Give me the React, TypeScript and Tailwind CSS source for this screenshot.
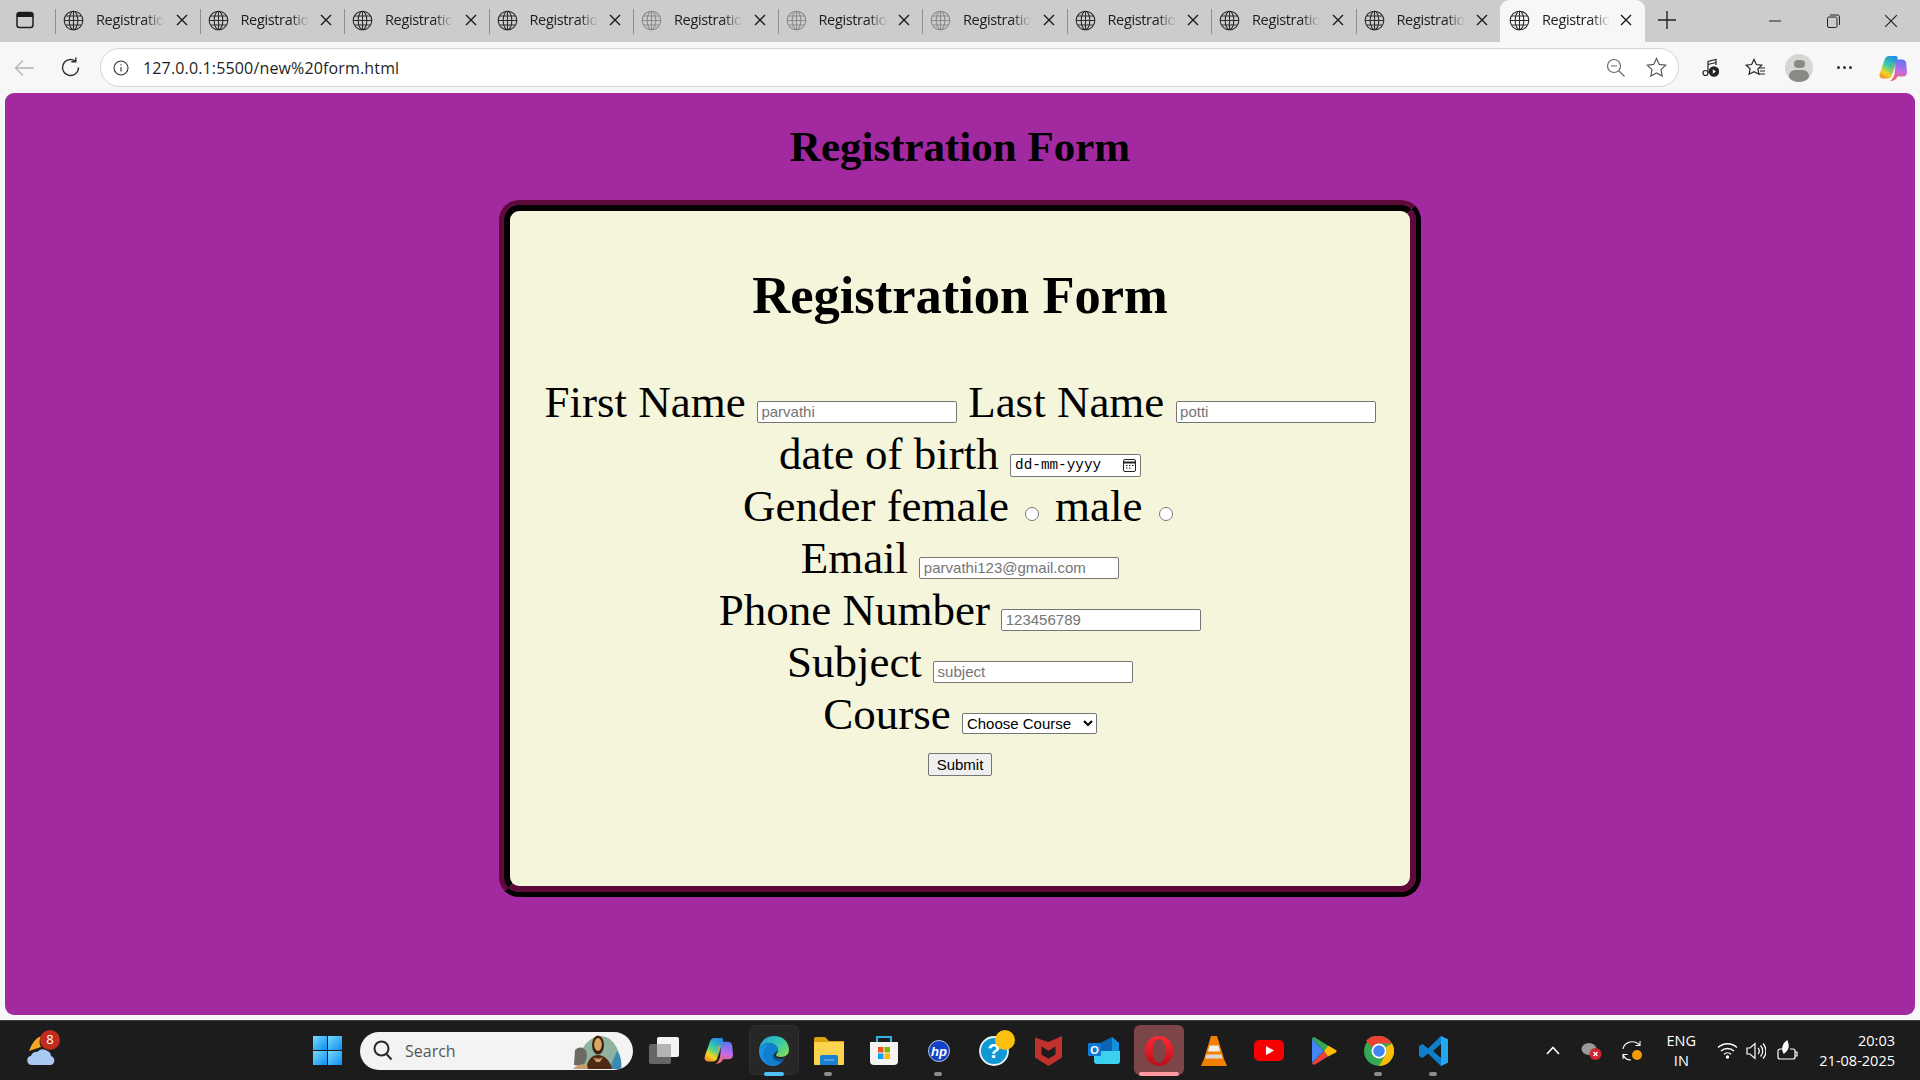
import React from "react";

const TABS = [0, 1, 2, 3, 4, 5, 6, 7, 8, 9, 10];

function Globe({ dim }: { dim?: boolean }) {
  return (
    <svg width="21" height="21" viewBox="0 0 21 21" fill="none" stroke={dim ? "#8a8a8a" : "#2b2b2b"} strokeWidth="1.1" className="shrink-0">
      <circle cx="10.5" cy="10.5" r="9.3" />
      <ellipse cx="10.5" cy="10.5" rx="4.3" ry="9.3" />
      <path d="M1.2 10.5h18.6M2.6 6h15.8M2.6 15h15.8M10.5 1.2v18.6" />
    </svg>
  );
}

function Close({ size = 12, width = 1.4, color = "#1a1a1a" }: { size?: number; width?: number; color?: string }) {
  return (
    <svg width={size} height={size} viewBox="0 0 12 12" fill="none" stroke={color} strokeWidth={width} className="shrink-0">
      <path d="M1 1l10 10M11 1L1 11" />
    </svg>
  );
}

function Tab({ i }: { i: number }) {
  const active = i === 10;
  const dim = i >= 4 && i <= 6;
  return (
    <div className={active ? "relative w-[145px] h-[42px] bg-[#f7f7f7] rounded-t-[9px] flex items-center pl-[9px] pr-[13px] pb-[2px]" : "relative w-[144.5px] h-[42px] flex items-center pl-[8px] pr-[12px] pb-[2px]"}>
      {!active && i !== 9 && <div className="absolute right-[-1px] top-[9px] h-[25px] w-px bg-[#8f8f8f]" />}
      {i === 0 && <div className="absolute left-0 top-[9px] h-[25px] w-px bg-[#8f8f8f]" />}
      <Globe dim={dim} />
      <span className="ml-[12px] whitespace-nowrap text-[14.5px] text-[#1d1d1d] [font-family:'Open_Sans',sans-serif] tracking-[-0.35px] [mask-image:linear-gradient(to_right,black_72%,transparent_100%)]">
        Registratio
      </span>
      <div className="ml-auto">
        <Close />
      </div>
    </div>
  );
}

function TabStrip() {
  return (
    <div className="h-[42px] shrink-0 bg-[#cccccc] flex items-start">
      <div className="w-[55px] h-[42px] flex items-center justify-center pr-[6px] pb-[2px]">
        <svg width="18" height="18" viewBox="0 0 18 18" fill="none">
          <rect x="1" y="1.5" width="16" height="15" rx="2.5" stroke="#1c1c1c" strokeWidth="1.5" />
          <path d="M1 6V4a2.5 2.5 0 0 1 2.5-2.5h11A2.5 2.5 0 0 1 17 4v2z" fill="#1c1c1c" />
        </svg>
      </div>
      {TABS.map((i) => (
        <Tab key={i} i={i} />
      ))}
      <div className="w-[44px] h-[42px] flex items-center justify-center pb-[2px]">
        <svg width="18" height="18" viewBox="0 0 18 18" stroke="#222" strokeWidth="1.4">
          <path d="M9 0v18M0 9h18" />
        </svg>
      </div>
      <div className="ml-auto flex h-[42px] items-center">
        <div className="w-[58px] flex justify-center">
          <svg width="12" height="2" viewBox="0 0 12 2" stroke="#222"><path d="M0 1h12" /></svg>
        </div>
        <div className="w-[58px] flex justify-center">
          <svg width="13" height="14" viewBox="0 0 13 14" fill="none" stroke="#222" strokeWidth="1">
            <rect x="0.5" y="3" width="9.5" height="10.5" rx="1.5" />
            <path d="M3 1h7.5A2 2 0 0 1 12.5 3v8" />
          </svg>
        </div>
        <div className="w-[58px] flex justify-center">
          <Close size={14} width={1} color="#222" />
        </div>
      </div>
    </div>
  );
}

function Copilot({ size, id }: { size: number; id: string }) {
  return (
    <svg width={size} height={size} viewBox="0 0 28 28">
      <defs>
        <linearGradient id={id + "a"} x1="0.7" y1="0" x2="0.2" y2="1">
          <stop offset="0" stopColor="#1f8fe8" />
          <stop offset="0.45" stopColor="#3fd0a0" />
          <stop offset="0.75" stopColor="#f2d81f" />
          <stop offset="1" stopColor="#f58a2a" />
        </linearGradient>
        <linearGradient id={id + "b"} x1="0.6" y1="0" x2="0.4" y2="1">
          <stop offset="0" stopColor="#5a78f0" />
          <stop offset="0.5" stopColor="#c06ae8" />
          <stop offset="1" stopColor="#f56a5a" />
        </linearGradient>
      </defs>
      <path d="M10 2h6.500c2 0 2.500 1.500 1.800 3.500L13 21c-.8 2.500-2 3.500-4.500 3.500H4C1.200 24.500 0 22 .8 19.500L5.500 6C6.300 3.500 8 2 10 2z" fill={"url(#" + id + "a)"} />
      <path d="M17 5.500h6c2.500 0 3.700 1.500 4.200 3.500l.8 9c0 3-1.500 4.500-4.500 4.500h-5c-1.500 3-3.500 4.500-7.500 4.500 2.500-1.500 3.500-4 4.500-7z" fill={"url(#" + id + "b)"} />
      <path d="M14 9.500l2-.5-3.500 11-1.500.5z" fill="#f4a03a" opacity="0.65" />
    </svg>
  );
}

function Toolbar() {
  return (
    <div className="h-[51px] shrink-0 bg-[#f7f7f7] flex items-center">
      <div className="w-[100px] flex items-center pl-[14px] gap-[25px]">
        <svg width="21" height="18" viewBox="0 0 21 18" fill="none" stroke="#b4b4b4" strokeWidth="1.3"><path d="M20 9H1.5M9 1.5L1.5 9 9 16.5" /></svg>
        <svg width="21" height="21" viewBox="0 0 21 21" fill="none" stroke="#2f2f2f" strokeWidth="1.4">
          <path d="M18.5 10.5A8 8 0 1 1 15 3.9" />
          <path d="M15.8 0.5v4.3h-4.4" />
        </svg>
      </div>
      <div className="w-[1579px] h-[39px] bg-white rounded-full border border-[#d4d4d4] flex items-center pl-[12px] pr-[11px]">
        <svg width="16" height="16" viewBox="0 0 16 16" fill="none" stroke="#333" strokeWidth="1.1">
          <circle cx="8" cy="8" r="7" />
          <path d="M8 7v4.5M8 4.2v1.2" />
        </svg>
        <span className="ml-[14px] text-[16px] text-[#1f1f1f] [font-family:'Open_Sans',sans-serif] tracking-[0.15px]">127.0.0.1:5500/new%20form.html</span>
        <div className="ml-auto flex items-center gap-[20px]">
          <svg width="20" height="20" viewBox="0 0 20 20" fill="none" stroke="#6a6a6a" strokeWidth="1.2">
            <circle cx="8" cy="8" r="6.5" />
            <path d="M5 8h6M13 13l5.5 5.5" />
          </svg>
          <svg width="21" height="21" viewBox="0 0 21 21" fill="none" stroke="#5a5a5a" strokeWidth="1.2">
            <path d="M10.5 1.5l2.8 5.9 6.4.8-4.7 4.4 1.2 6.4-5.7-3.1-5.7 3.1 1.2-6.4L1.3 8.2l6.4-.8z" />
          </svg>
        </div>
      </div>
      <div className="flex-1 relative h-[51px] flex items-center pl-[23px]">
        <svg width="17" height="19" viewBox="0 0 17 19" fill="none" stroke="#222" strokeWidth="1.2">
          <circle cx="3.5" cy="15" r="2.5" />
          <path d="M6 15V3.5L14 1.5V7" />
          <path d="M6 6.5L14 4.5" />
          <circle cx="12" cy="13.5" r="4.6" fill="#222" />
          <path d="M10.8 11.3l3 2.2-3 2.2z" fill="#fff" stroke="none" />
        </svg>
        <svg width="21" height="20" viewBox="0 0 21 20" fill="none" stroke="#222" strokeWidth="1.2" className="ml-[26px]">
          <path d="M9 1.5l2.4 5 5.4.7-3.9 3.7 1 5.3L9 13.6l-4.9 2.6 1-5.3L1.2 7.2l5.4-.7z" />
          <path d="M14 10h6M15 13h5M14 16h6" />
        </svg>
        <div className="ml-[19px] w-[28px] h-[28px] rounded-full bg-[#d8d6d2] overflow-hidden flex flex-col items-center">
          <div className="mt-[6px] w-[11px] h-[11px] rounded-full bg-[#8b8985]" />
          <div className="mt-[2px] w-[20px] h-[14px] rounded-full bg-[#8b8985]" />
        </div>
        <div className="ml-[24px] flex gap-[3px]">
          <div className="w-[3px] h-[3px] rounded-full bg-[#333]" />
          <div className="w-[3px] h-[3px] rounded-full bg-[#333]" />
          <div className="w-[3px] h-[3px] rounded-full bg-[#333]" />
        </div>
        <div className="ml-[27px]">
          <Copilot size={28} id="cp1" />
        </div>
      </div>
    </div>
  );
}

const inputCls = "inline-block w-[200px] h-[22px] bg-white border border-[#767676] rounded-[2px] px-[3.5px] text-[15px] leading-[17px] text-black placeholder:text-[#757575] [font-family:'Liberation_Sans',Arial,sans-serif] align-baseline";
const radioCls = "m-[3px_4.400px_0_5px] w-[14px] h-[14px] align-baseline";

function Field({ placeholder, type = "text" }: { placeholder: string; type?: string }) {
  return <input type={type} placeholder={placeholder} className={inputCls} />;
}

function FormCard() {
  return (
    <div className="w-[922px] h-[697px] mx-auto rounded-[20px] border-[5px] border-t-[#5e0a3a] border-l-[#5e0a3a] border-r-black border-b-black">
      <div className="h-full rounded-[15px] border-[6px] border-t-black border-l-black border-r-[#5e0a3a] border-b-[#5e0a3a] bg-[#f5f5dc] text-center">
        <h1 className="text-[52.5px] font-bold leading-[60px] pt-[54px] text-black">Registration Form</h1>
        <div className="mt-[51px] text-[45px] leading-[52px] text-black">
          First Name <Field placeholder="parvathi" /> Last Name <Field placeholder="potti" />
          <br />
          date of birth{" "}
          <span className="inline-flex items-center w-[131px] h-[23px] bg-white border border-[#767676] rounded-[2px] pl-[4px] pr-[3px] text-[14.33px] leading-[21px] text-black [font-family:'Liberation_Mono',monospace] align-baseline">
            dd-mm-yyyy
            <svg width="13" height="13" viewBox="0 0 13 13" fill="none" stroke="#222" strokeWidth="1" className="ml-auto mr-[1px]">
              <rect x="0.5" y="0.5" width="12" height="12" rx="1.5" />
              <path d="M0.5 3.500h12" strokeWidth="2" />
              <path d="M3 6.500h1.500M6 6.500h1.500M9 6.500h1.500M3 9h1.500M6 9h1.500" />
            </svg>
          </span>
          <br />
          Gender female <input type="radio" name="g" className={radioCls} /> male{" "}
          <input type="radio" name="g" className={radioCls} />
          <br />
          Email <Field placeholder="parvathi123@gmail.com" />
          <br />
          Phone Number <Field placeholder="123456789" />
          <br />
          Subject <Field placeholder="subject" />
          <br />
          Course{" "}
          <select className="w-[135px] h-[21px] bg-white border border-[#767676] rounded-[2px] text-[15px] text-black [font-family:'Liberation_Sans',Arial,sans-serif] align-baseline">
            <option>Choose Course</option>
          </select>
        </div>
        <button className="mt-[13px] w-[64px] h-[23px] bg-[#efefef] border border-[#767676] rounded-[2px] text-[15px] leading-[17px] text-black [font-family:'Liberation_Sans',Arial,sans-serif]">
          Submit
        </button>
      </div>
    </div>
  );
}

function PageArea() {
  return (
    <div className="flex-1 min-h-0 bg-[#f7f7f7] px-[5px] pb-[5px]">
      <div className="h-full rounded-[9px] bg-[#a2299f] [font-family:'Liberation_Serif','Times_New_Roman',serif]">
        <h2 className="text-center text-[43px] font-bold leading-[50px] pt-[29px] pb-[28px] text-black">Registration Form</h2>
        <FormCard />
      </div>
    </div>
  );
}

function Slot({ children, bg, bar, dot }: { children: React.ReactNode; bg?: string; bar?: string; dot?: boolean }) {
  return (
    <div className="relative w-[55px] h-[60px] flex items-center justify-center">
      {bg && <div className={bg} />}
      <div className="relative flex items-center justify-center">{children}</div>
      {bar && <div className={bar} />}
      {dot && <div className="absolute bottom-[5px] left-[23px] w-[8px] h-[4px] rounded-full bg-[#8c8c8c]" />}
    </div>
  );
}

function TaskView() {
  return (
    <svg width="32" height="30" viewBox="0 0 32 30">
      <rect x="1" y="8" width="22" height="20" rx="2" fill="#666" />
      <rect x="9" y="1" width="22" height="20" rx="2" fill="#f3f3f3" />
      <rect x="9" y="8" width="14" height="13" rx="1" fill="#b4b4b4" />
    </svg>
  );
}

function EdgeIcon() {
  return (
    <svg width="30" height="30" viewBox="0 0 30 30">
      <defs>
        <linearGradient id="eg" x1="0" y1="0" x2="1" y2="0.8"><stop offset="0" stopColor="#1f9fdc" /><stop offset="0.55" stopColor="#35c8b0" /><stop offset="1" stopColor="#7fdc5c" /></linearGradient>
      </defs>
      <path d="M15 0c9 0 15 6 15 14 0 4-3 7-8 7-3 0-5-1-5-2 0-1 2-2 2-5 0-4-4-7-9-7C5 7 0 11 0 15 0 6 7 0 15 0z" fill="url(#eg)" />
      <path d="M0 15c0-5 5-8 10-8 5 0 9 3 9 7 0 1-1 2-3 3-3 2-3 5 0 7 2 1 5 2 8 1-3 3-6 5-10 5C6 30 0 23 0 15z" fill="#0f7fd0" />
      <path d="M19 14c0 1-1 2-3 3-3 2-3 5 0 7 2 1 5 2 8 1l2-3c-4 2-11 1-11-4 0-2 3-3 4-4z" fill="#0b5a9e" />
      <path d="M7 11c-3 3-4 8-2 12 2 3 5 6 10 7-8 0-15-7-15-15 0-3 3-6 7-7 2-.4 3 1 0 3z" fill="#1c8fe0" />
    </svg>
  );
}

function ExplorerIcon() {
  return (
    <svg width="30" height="28" viewBox="0 0 30 28">
      <path d="M0 2a2 2 0 0 1 2-2h9l4 4h15v6H0z" fill="#d9a20f" />
      <rect x="0" y="5" width="30" height="23" rx="1" fill="#fcd34f" />
      <path d="M5 28v-8a2 2 0 0 1 2-2h14a2 2 0 0 1 2 2v8z" transform="translate(1 0)" fill="#1c80d0" />
      <path d="M10 23h10" stroke="#8cc8f0" strokeWidth="1" />
    </svg>
  );
}

function StoreIcon() {
  return (
    <svg width="30" height="30" viewBox="0 0 30 30">
      <path d="M8 6V1h14v5" fill="none" stroke="#30b4e8" strokeWidth="2" />
      <path d="M1 6h28v19a4 4 0 0 1-4 4H5a4 4 0 0 1-4-4z" fill="#f4f4f4" />
      <rect x="9" y="11" width="5.500" height="5.500" fill="#f25022" />
      <rect x="15.500" y="11" width="5.500" height="5.500" fill="#7fba00" />
      <rect x="9" y="17.500" width="5.500" height="5.500" fill="#00a4ef" />
      <rect x="15.500" y="17.500" width="5.500" height="5.500" fill="#ffb900" />
    </svg>
  );
}

function HpIcon() {
  return (
    <svg width="22" height="22" viewBox="0 0 22 22">
      <circle cx="11" cy="11" r="10.500" fill="#1142c8" stroke="#b8c4e4" strokeWidth="1" />
      <text x="11" y="15.500" textAnchor="middle" fontSize="13" fontStyle="italic" fontWeight="700" fill="#fff" fontFamily="Liberation Sans">hp</text>
    </svg>
  );
}

function HelpIcon() {
  return (
    <svg width="42" height="42" viewBox="0 0 42 42" className="m-[-6px]">
      <circle cx="21" cy="21" r="14" fill="#1098d4" stroke="#e8f4fa" strokeWidth="1.800" />
      <text x="21" y="28" textAnchor="middle" fontSize="21" fontWeight="700" fill="#fff" fontFamily="Liberation Sans">?</text>
      <circle cx="32" cy="10" r="10" fill="#fcc00c" />
    </svg>
  );
}

function McAfeeIcon() {
  return (
    <svg width="27" height="30" viewBox="0 0 27 30">
      <path d="M0 1.500L13.500 6 27 0v21.500L13.500 30 0 21.500z M6.500 10.500v8l7 4.200 7-4.200v-8l-7 4.300z" fill="#c0312d" fillRule="evenodd" />
    </svg>
  );
}

function OutlookIcon() {
  return (
    <svg width="32" height="28" viewBox="0 0 32 28">
      <path d="M12 6l12-6 7 6v8H12z" fill="#0a64b4" />
      <path d="M24 0l7 6v8h-7z" fill="#1490df" />
      <path d="M6 14h26v10a3 3 0 0 1-3 3H9a3 3 0 0 1-3-3z" fill="#3bcff0" />
      <rect x="0" y="6" width="13" height="13" rx="1" fill="#0f78d4" />
      <text x="6.500" y="16.500" textAnchor="middle" fontSize="11" fontWeight="700" fill="#fff" fontFamily="Liberation Sans">O</text>
    </svg>
  );
}

function OperaIcon() {
  return (
    <svg width="30" height="30" viewBox="0 0 30 30">
      <defs>
        <linearGradient id="og" x1="0" y1="0" x2="0" y2="1"><stop offset="0" stopColor="#ff2a35" /><stop offset="1" stopColor="#b80f1a" /></linearGradient>
      </defs>
      <ellipse cx="15" cy="15" rx="14.500" ry="15" fill="url(#og)" />
      <ellipse cx="15" cy="15" rx="6.500" ry="12" fill="#7c4648" />
    </svg>
  );
}

function VlcIcon() {
  return (
    <svg width="26" height="30" viewBox="0 0 26 30">
      <path d="M10 0h6l8 26H2z" fill="#f08000" />
      <path d="M8.500 9.500h9l1.500 6H7z" fill="#eee" />
      <path d="M5.500 18.500h15l1 4h-17z" fill="#d8d8d8" />
      <path d="M2 25h22l2 5H0z" fill="#f08000" />
    </svg>
  );
}

function YouTubeIcon() {
  return (
    <svg width="30" height="21" viewBox="0 0 30 21">
      <rect width="30" height="21" rx="5" fill="#f70000" />
      <path d="M12 6l8 4.500-8 4.500z" fill="#fff" />
    </svg>
  );
}

function PlayIcon() {
  return (
    <svg width="26" height="28" viewBox="0 0 26 28">
      <path d="M1 1.500V26L13 14z" fill="#4285f4" />
      <path d="M1 1.500c.5-1 2-1.500 3-1l13 8-4 5.500z" fill="#34a853" />
      <path d="M1 26.500c.5 1 2 1.500 3 1l13-8-4-5.500z" fill="#ea4335" />
      <path d="M17 8.500l7.500 4.200c1.500 1 1.500 2 0 3L17 19.500 13 14z" fill="#fbbc04" />
    </svg>
  );
}

function ChromeIcon() {
  return (
    <svg width="30" height="30" viewBox="0 0 30 30">
      <circle cx="15" cy="15" r="15" fill="#34a853" />
      <path d="M15 0a15 15 0 0 1 13 7.500H15a7.500 7.500 0 0 0-6.500 3.750L2 4.800A15 15 0 0 1 15 0z" fill="#ea4335" />
      <path d="M28 7.500A15 15 0 0 1 15 30l6.500-11.250A7.500 7.500 0 0 0 21.500 11.250z" fill="#fbbc04" />
      <circle cx="15" cy="15" r="7.500" fill="#fff" />
      <circle cx="15" cy="15" r="5.800" fill="#4285f4" />
    </svg>
  );
}

function VsCodeIcon() {
  return (
    <svg width="30" height="30" viewBox="0 0 30 30">
      <path d="M22 0l7 3.500v23L22 30 9 17.500 3.500 22 0 20v-10l3.500-2L9 12.500z M22 8l-8 7 8 7z" fill="#0f7fcb" fillRule="evenodd" />
      <path d="M22 0l7 3.500v23L22 30z" fill="#24a6f0" />
    </svg>
  );
}

function Weather() {
  return (
    <div className="relative w-[32px] h-[38px]">
      <svg width="32" height="34" viewBox="0 0 32 34" className="absolute left-[1px] top-[4px]">
        <path d="M15 0c-2 4-2 8 0 11L3 15c3-8 7-13 12-15z" fill="#f5a623" />
        <path d="M6 29a4.700 4.700 0 0 1-1-9.300 6.500 6.500 0 0 1 6.500-4 8 8 0 0 1 10-.7 6 6 0 0 1 3.500 5 4.700 4.700 0 0 1 0 9z" fill="#a9c8f2" />
      </svg>
      <div className="absolute left-[15px] top-[-2px] w-[20px] h-[20px] rounded-full bg-[#c42b1c] flex items-center justify-center text-[13px] text-white [font-family:'Open_Sans',sans-serif] leading-none">8</div>
    </div>
  );
}

function MonaLisa() {
  return (
    <svg width="50" height="36" viewBox="0 0 50 36" className="shrink-0">
      <path d="M6 36C4 18 14 4 28 3c11 0 21 14 20 33z" fill="#8fb3a0" />
      <path d="M44 18c4 5 5 12 4 18H36z" fill="#3b89b0" />
      <path d="M2 17c4-4 9-3 11 1s0 13-4 15l-8-1z" fill="#6d6a60" />
      <ellipse cx="25" cy="12" rx="6" ry="9.500" fill="#3e2410" />
      <ellipse cx="25" cy="11.500" rx="3.800" ry="6.500" fill="#d9a862" />
      <path d="M13 36c2-10 6-14 12-14s12 5 14 14z" fill="#4e2a14" />
      <path d="M20 24c2.500 2 7.500 2 10 0l-3 5h-4z" fill="#c69a5c" />
      <path d="M1 35c3-3 10-5 13-3l1 4H0z" fill="#c8a070" />
    </svg>
  );
}

function Taskbar() {
  return (
    <div className="h-[60px] shrink-0 bg-[#1c1c1c] border-t border-[#3a3a3a] flex items-center relative text-white">
      <div className="w-[313px] pl-[25px] flex items-center">
        <Weather />
      </div>
      <svg width="29" height="29" viewBox="0 0 29 29" className="shrink-0">
        <defs>
          <linearGradient id="wg" x1="0" y1="0" x2="1" y2="1"><stop offset="0" stopColor="#7ad9fb" /><stop offset="1" stopColor="#0a8ef0" /></linearGradient>
        </defs>
        <rect x="0" y="0" width="14" height="14" fill="url(#wg)" />
        <rect x="15" y="0" width="14" height="14" fill="url(#wg)" />
        <rect x="0" y="15" width="14" height="14" fill="url(#wg)" />
        <rect x="15" y="15" width="14" height="14" fill="url(#wg)" />
      </svg>
      <div className="ml-[18px] w-[273px] h-[38px] rounded-full bg-[#f3f3f3] flex items-center pl-[13px] overflow-hidden shrink-0">
        <svg width="20" height="21" viewBox="0 0 20 21" fill="none" stroke="#2a2a2a" strokeWidth="2">
          <circle cx="8.500" cy="8.500" r="7" />
          <path d="M13.500 14l5 5.500" />
        </svg>
        <span className="ml-[12px] text-[16px] text-[#555] [font-family:'Open_Sans',sans-serif]">Search</span>
        <div className="ml-auto mr-[10px]"><MonaLisa /></div>
      </div>
      <div className="ml-[3px] flex items-center shrink-0">
        <Slot><TaskView /></Slot>
        <Slot><Copilot size={29} id="cp2" /></Slot>
        <Slot bg="absolute left-[2.500px] top-[4px] w-[50px] h-[50px] rounded-[6px] bg-[#272727] border border-[#303030]" bar="absolute bottom-[5px] left-[17.500px] w-[20px] h-[4px] rounded-full bg-[#4fc3f7]"><EdgeIcon /></Slot>
        <Slot dot><ExplorerIcon /></Slot>
        <Slot><StoreIcon /></Slot>
        <Slot dot><HpIcon /></Slot>
        <Slot><HelpIcon /></Slot>
        <Slot><McAfeeIcon /></Slot>
        <Slot><OutlookIcon /></Slot>
        <Slot bg="absolute left-[2.500px] top-[4px] w-[50px] h-[50px] rounded-[6px] bg-[#7c4648]" bar="absolute bottom-[5px] left-[7.500px] w-[40px] h-[4px] rounded-full bg-[#ff9aa2]"><OperaIcon /></Slot>
        <Slot><VlcIcon /></Slot>
        <Slot><YouTubeIcon /></Slot>
        <Slot><PlayIcon /></Slot>
        <Slot dot><ChromeIcon /></Slot>
        <Slot dot><VsCodeIcon /></Slot>
      </div>
      <div className="ml-auto flex items-center pr-[25px] [font-family:'Open_Sans',sans-serif]">
        <svg width="14" height="9" viewBox="0 0 14 9" fill="none" stroke="#fff" strokeWidth="1.600"><path d="M1 8l6-6.500L13 8" /></svg>
        <svg width="22" height="20" viewBox="0 0 22 20" className="ml-[21px]">
          <ellipse cx="8" cy="8" rx="7.500" ry="6" fill="#9a9a9a" />
          <circle cx="14.500" cy="13" r="6" fill="#d0242f" />
          <path d="M12.500 11l4 4M16.500 11l-4 4" stroke="#fff" strokeWidth="1.300" />
        </svg>
        <svg width="22" height="22" viewBox="0 0 22 22" fill="none" stroke="#fff" strokeWidth="1.100" className="ml-[19px]">
          <path d="M1 9C2 3 9 0 15 3l3 2M18 1v4.500h-4.500" />
          <path d="M9 20C5 20 2 18 1 14M1 19v-4.500h4.500" />
          <circle cx="15" cy="15" r="5" fill="#f59a00" stroke="none" />
        </svg>
        <div className="ml-[14.500px] w-[46px] text-center text-[14.500px] leading-[20px] text-white">
          <div>ENG</div>
          <div>IN</div>
        </div>
        <svg width="21" height="17" viewBox="0 0 21 17" fill="none" stroke="#fff" strokeWidth="1.400" className="ml-[13px]">
          <path d="M1 5.500a14 14 0 0 1 19 0M4 9a9.500 9.500 0 0 1 13 0M7 12.300a5 5 0 0 1 7 0" />
          <circle cx="10.500" cy="15" r="1" fill="#fff" />
        </svg>
        <svg width="20" height="20" viewBox="0 0 20 20" fill="none" stroke="#fff" strokeWidth="1.200" className="ml-[8px]">
          <path d="M1 7h3l5-4.500v15L4 13H1z" />
          <path d="M12 7a4.500 4.500 0 0 1 0 6M14.500 4.500a8 8 0 0 1 0 11M17 2.500a11 11 0 0 1 0 15" />
        </svg>
        <svg width="21" height="22" viewBox="0 0 21 22" fill="none" stroke="#fff" strokeWidth="1.200" className="ml-[11px]">
          <path d="M5 9H3a2 2 0 0 0-2 2v6a2 2 0 0 0 2 2h13a2 2 0 0 0 2-2v-6a2 2 0 0 0-2-2h-3M18 12h2v4h-2" />
          <path d="M7 13C4 8 7 3 10 1c2 4 2 8-3 12z" fill="#fff" />
        </svg>
        <div className="ml-[21px] text-right text-[14.500px] leading-[20px] text-white">
          <div>20:03</div>
          <div>21-08-2025</div>
        </div>
      </div>
    </div>
  );
}

export default function App() {
  return (
    <div className="w-[1920px] h-[1080px] flex flex-col overflow-hidden">
      <TabStrip />
      <Toolbar />
      <PageArea />
      <Taskbar />
    </div>
  );
}
